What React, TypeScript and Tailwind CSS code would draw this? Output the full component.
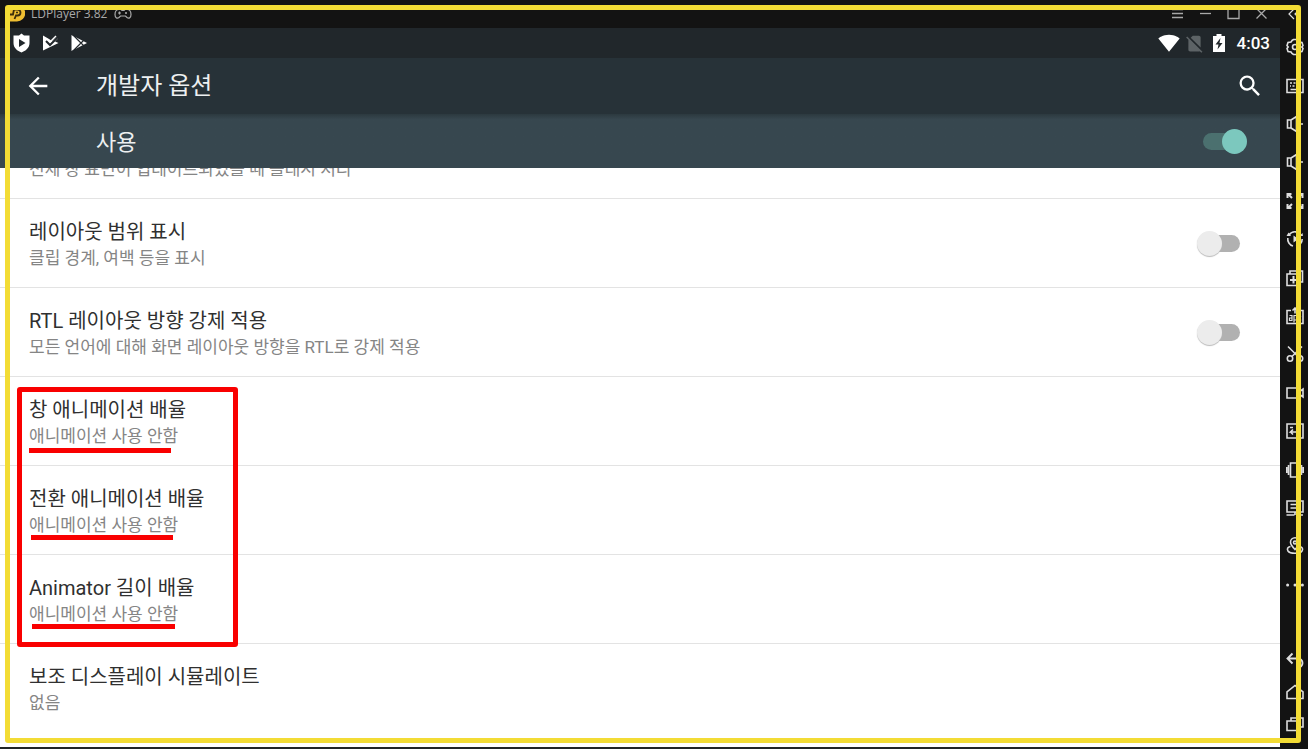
import type { ReactNode } from "react";
import { MdArrowBack, MdSearch, MdSignalWifi4Bar, MdSignalCellularNoSim } from "react-icons/md";

type Option = { id: string; title: string; summary: string; toggle?: boolean };

const options: Option[] = [
  { id: "layout-bounds", title: "레이아웃 범위 표시", summary: "클립 경계, 여백 등을 표시", toggle: true },
  { id: "rtl", title: "RTL 레이아웃 방향 강제 적용", summary: "모든 언어에 대해 화면 레이아웃 방향을 RTL로 강제 적용", toggle: true },
  { id: "window-scale", title: "창 애니메이션 배율", summary: "애니메이션 사용 안함" },
  { id: "transition-scale", title: "전환 애니메이션 배율", summary: "애니메이션 사용 안함" },
  { id: "animator-scale", title: "Animator 길이 배율", summary: "애니메이션 사용 안함" },
  { id: "display", title: "보조 디스플레이 시뮬레이트", summary: "없음" },
];

function Icon({ children }: { children: ReactNode }) {
  return (
    <svg viewBox="0 0 18 18" className="size-[18px]" fill="none" stroke="currentColor" strokeWidth="1.600" aria-hidden="true">
      {children}
    </svg>
  );
}

const speaker = <path d="M1.500 5v8H5V5zM5 5 10.500 1.500v15L5 13M13.500 9H17" />;

const tools: { label: string; icon: ReactNode }[] = [
  {
    label: "설정",
    icon: (
      <>
        <path d="M6 2.500 7.500 1.500h3L12 2.500l1 1.500 3 .5 1 3-1.200 1.500L17 10.500l-1 3-3 .5-1 1.500-1.500 1h-3l-1.500-1L5 14l-3-.5-1-3L2.200 9 1 7.500l1-3 3-.5z" />
        <circle cx="9" cy="9" r="2.500" />
      </>
    ),
  },
  {
    label: "키보드",
    icon: (
      <>
        <path d="M1 2.500h16v13H1z" />
        <path d="M4 6h2M7.500 6h2M11 6h3M4 9h1M6.500 9h2M10 9h2M13 9h1M4.500 12.500h9" />
      </>
    ),
  },
  { label: "볼륨 높이기", icon: speaker },
  { label: "볼륨 낮추기", icon: speaker },
  {
    label: "전체 화면",
    icon: <path strokeWidth="2" d="M1.500 6V2h4M2 2l4 4M12.500 2h4v4M16 2l-4 4M1.500 12v4h4M2 16l4-4M12.500 16h4v-4M16 16l-4-4" />,
  },
  {
    label: "동기화",
    icon: (
      <>
        <path d="M15.500 6A7.200 7.200 0 0 0 3 5M1.800 8A7.200 7.200 0 0 0 7 16M10 16.200A7.200 7.200 0 0 0 16.200 9" />
        <path d="M7.500 5.500v7l5-3.500zM.5 6l2-3.500L5 6zM14 5.500l3 .5-.5-3z" fill="currentColor" stroke="none" />
      </>
    ),
  },
  {
    label: "멀티 플레이어",
    icon: (
      <>
        <path d="M1 5h12.500v11.500H1zM4 5V2h12.500v11h-3" />
        <path strokeWidth="2" d="M7.500 7v7.500M4 11h7" />
      </>
    ),
  },
  {
    label: "APK 설치",
    icon: (
      <>
        <path d="M5 3.500H1v13h16v-13h-4M9 6.500V1M6.500 3.500 9 1l2.500 2.500" />
        <path strokeWidth="1.200" d="M3.500 8.500H6v5H3.500V11H6M8 15.500v-7h2.500v4.500H8M12.500 7v6.500M15 9l-2.500 2 2.500 2.500" />
      </>
    ),
  },
  {
    label: "스크린샷",
    icon: (
      <>
        <circle cx="4" cy="13.500" r="2.700" />
        <circle cx="14" cy="13.500" r="2.700" />
        <path d="M2 1.500 12 11.500M16 1.500 6 11.500" />
      </>
    ),
  },
  { label: "녹화", icon: <path d="M1 4h12v10H1zM13 8l4-3v8l-4-3" /> },
  {
    label: "조작 기록",
    icon: <path d="M1 2h16v14H1zM4 5.500h3M10 5.500h4M14 10H4.500L7 7.500M4.500 10 7 12.500" />,
  },
  { label: "흔들기", icon: <path d="M4.500 2h9v14h-9zM2.500 4v10M.8 6v6M15.500 4v10M17.200 6v6" /> },
  {
    label: "가상 화면",
    icon: <path d="M1 2h16v11H1zM4.500 5.500h8M4.500 9h6M.5 16h8M11.500 16H17M9 13v3" />,
  },
  {
    label: "위치",
    icon: (
      <>
        <path d="M9 12.500S4.500 8 4.500 5.300a4.500 4.500 0 0 1 9 0C13.500 8 9 12.500 9 12.500z" />
        <circle cx="9" cy="5.500" r="1.500" />
        <path d="M4.500 9.500C1.500 10 .8 12 2 14c2 3 12 3 14 0 1.200-2 .5-4-2.500-4.500" />
      </>
    ),
  },
  {
    label: "더 보기",
    icon: (
      <g fill="currentColor" stroke="none">
        <circle cx="1.600" cy="9" r="1.500" />
        <circle cx="9" cy="9" r="1.500" />
        <circle cx="16.400" cy="9" r="1.500" />
      </g>
    ),
  },
];

const navigation: { label: string; icon: ReactNode }[] = [
  { label: "뒤로", icon: <path strokeWidth="1.900" d="M6.500 2.500 1.500 7.500l5 5M1.500 7.500h10c3 0 5 2 5 4.500s-2 4.500-5 4.500h-1" /> },
  { label: "홈", icon: <path d="M1 15.500V9l8-6.500L17 9v6.500z" /> },
  { label: "최근 앱", icon: <path d="M1 6h12v9.500H1zM5 6V3h12v9h-4" /> },
];

function SideButton({ label, icon }: { label: string; icon: ReactNode }) {
  return (
    <button type="button" aria-label={label} className="flex items-center justify-center">
      <Icon>{icon}</Icon>
    </button>
  );
}

function Logo() {
  return (
    <svg viewBox="0 0 17 17" className="size-[17px]" aria-hidden="true">
      <path d="M4 0h5a8 8 0 0 1 0 16.500H1V12H0V9h2V3z" fill="#eebd31" />
      <path d="M6.500 14 8 10.500h1.500a3 3 0 0 0 0-6H6L5 9.500H2" fill="none" stroke="#3b2c0c" strokeWidth="1.800" />
      <path d="M8 7.500h2" stroke="#3b2c0c" strokeWidth="1.500" />
    </svg>
  );
}

function TitleBar() {
  return (
    <div className="flex h-[28px] items-center justify-between bg-[#131313] pr-3 pb-px pl-2 text-[#a9a9a9]">
      <div className="flex items-center gap-[6px]">
        <Logo />
        <span className="font-['Open_Sans',sans-serif] text-[12px] leading-4">LDPlayer 3.82</span>
        <svg viewBox="0 0 18 12" className="ml-px h-3 w-[18px]" fill="none" stroke="currentColor" strokeWidth="1.200" aria-hidden="true">
          <path d="M5 1.500h2l1 1h2l1-1h2c3 0 4 2 4 5s-2 4.500-4 3L11.500 8h-5L5 9.500c-2 1.500-4 0-4-3s1-5 4-5z" />
          <path d="M4 5h3M5.500 3.500v3M12 4v2M13 5h-2" />
        </svg>
      </div>
      <div className="flex items-center gap-[15px]">
        <button type="button" aria-label="메뉴">
          <svg viewBox="0 0 13 13" className="size-[13px]" stroke="currentColor" strokeWidth="1.300"><path d="M1 2.500h11M1 6.500h11M1 10.500h11" /></svg>
        </button>
        <button type="button" aria-label="최소화">
          <svg viewBox="0 0 13 13" className="size-[13px]" stroke="currentColor" strokeWidth="1.300"><path d="M1 6.500h11" /></svg>
        </button>
        <button type="button" aria-label="최대화">
          <svg viewBox="0 0 13 13" className="size-[13px]" fill="none" stroke="currentColor" strokeWidth="1.300"><path d="M1 1h11v10.500H1z" /></svg>
        </button>
        <button type="button" aria-label="닫기">
          <svg viewBox="0 0 13 13" className="size-[13px]" stroke="currentColor" strokeWidth="1.300"><path d="m1.500 1.500 10 10M11.500 1.500l-10 10" /></svg>
        </button>
      </div>
    </div>
  );
}

function StatusBar() {
  return (
    <div className="flex h-[30px] items-center justify-between bg-[#21272b] pr-[10px] pl-3 text-white">
      <div className="flex items-center gap-[10px]">
        <svg viewBox="0 0 19 20" className="h-5 w-[19px]" aria-hidden="true">
          <path d="M9.500.5 12 2.500h5.500V10c0 5-4 8-8 9.500C5.500 18 1.500 15 1.500 10V2.500H7z" fill="#fff" />
          <path d="M7 6v8l6.500-4z" fill="#21272b" />
        </svg>
        <svg viewBox="0 0 19 20" className="h-5 w-[19px]" aria-hidden="true">
          <path d="M2 2.500 8 6l3 2 5-4 1 1.500-3 3 3.500 1.500L2 17.500z" fill="#fff" />
          <path d="m5 8 4 4 8-8" fill="none" stroke="#21272b" strokeWidth="2" />
          <path d="m9 9 6-6" stroke="#fff" strokeWidth="1.500" />
        </svg>
        <svg viewBox="0 0 19 20" className="h-5 w-[19px]" aria-hidden="true">
          <path d="M1.500 2 17 10 1.500 18z" fill="#fff" />
          <path d="m2 1 12 12M2 19 14 7" stroke="#21272b" strokeWidth="1.200" />
        </svg>
      </div>
      <div className="flex items-center">
        <MdSignalWifi4Bar className="size-[22px]" aria-hidden="true" />
        <MdSignalCellularNoSim className="ml-1 size-[21px] text-[#5d6366]" aria-hidden="true" />
        <svg viewBox="0 0 12 18" className="ml-2 h-[18px] w-3" aria-hidden="true">
          <path d="M3.500 0h5v2H12v16H0V2h3.500z" fill="#fff" />
          <path d="M7.500 4 2.500 10.500h3L4.500 15.500 9.500 9h-3z" fill="#21272b" />
        </svg>
        <span className="ml-3 text-[17px] leading-6 font-medium">4:03</span>
      </div>
    </div>
  );
}

function OptionRow({ option }: { option: Option }) {
  return (
    <li className="flex items-center justify-between border-b border-[#e3e3e3] pr-10 pl-[29px] last:border-b-0">
      <label htmlFor={option.toggle ? option.id : undefined} className="flex flex-col pt-5 pb-4">
        <span className="text-[20px] leading-[26px] text-[#303030]">{option.title}</span>
        <span className="text-[17px] leading-[26px] text-[#858585]">{option.summary}</span>
      </label>
      {option.toggle && (
        <input
          id={option.id}
          type="checkbox"
          role="switch"
          className="relative h-[17px] w-9 appearance-none rounded-full bg-[#b1b1b1] before:absolute before:-top-1 before:-left-[7px] before:size-[25px] before:rounded-full before:bg-[#ececec] before:shadow-[0_1px_1px_#bbbbbb] checked:before:left-4"
        />
      )}
    </li>
  );
}

function Annotations() {
  return (
    <div className="pointer-events-none absolute inset-0" aria-hidden="true">
      <div className="absolute top-[387px] left-[17px] h-[260px] w-[221px] rounded-[3px] border-5 border-[#f90000]" />
      <div className="absolute top-[448px] left-[29px] h-[5px] w-[142px] bg-[#f90000]" />
      <div className="absolute top-[535px] left-[31px] h-[5px] w-[142px] bg-[#f90000]" />
      <div className="absolute top-[624px] left-8 h-[5px] w-[143px] bg-[#f90000]" />
      <div className="absolute top-[5px] right-[7px] bottom-[6px] left-[5px] rounded-[3px] border-5 border-[#f3dc35]" />
    </div>
  );
}

export default function App() {
  return (
    <div className="relative flex min-h-screen bg-[#131313] font-[Roboto,'Noto_Sans_CJK_KR',sans-serif]">
      <div className="flex min-w-0 flex-1 flex-col border-b-2 border-[#202426]">
        <TitleBar />
        <StatusBar />
        <header className="flex h-14 items-center bg-[#273238] pr-4 pl-6 text-white">
          <button type="button" aria-label="뒤로" className="mr-11">
            <MdArrowBack className="size-7" />
          </button>
          <h1 className="flex-1 text-[24px] leading-8 text-[#edf0f1]">개발자 옵션</h1>
          <button type="button" aria-label="검색">
            <MdSearch className="size-7" />
          </button>
        </header>
        <div className="flex h-[54px] items-center justify-between bg-[#37474f] bg-linear-to-b from-[#2c393f] to-[#37474f] to-10% pr-[39px] pl-[96px]">
          <label htmlFor="enabled" className="pt-1 text-[22px] leading-8 text-[#edf0f1]">
            사용
          </label>
          <input
            id="enabled"
            type="checkbox"
            role="switch"
            defaultChecked
            className="relative h-[17px] w-[38px] appearance-none rounded-full bg-[#4b706f] before:absolute before:-top-1 before:right-4 before:size-[25px] before:rounded-full before:bg-[#7cc8be] checked:before:-right-[6px]"
          />
        </div>
        <main className="flex-1 bg-white">
          <div className="flex h-[31px] items-end overflow-hidden border-b border-[#e3e3e3] pb-4 pl-[29px]">
            <p className="text-[17px] leading-[26px] text-[#858585]">전체 창 표면이 업데이트되었을 때 플래시 처리</p>
          </div>
          <ul>
            {options.map((option) => (
              <OptionRow key={option.id} option={option} />
            ))}
          </ul>
        </main>
      </div>
      <aside className="flex w-7 flex-col bg-[#131313] pl-px text-[#dedede]">
        <button type="button" aria-label="접기" className="flex h-[28px] items-center justify-center">
          <Icon>
            <path strokeWidth="1.200" d="M8 4 3 9l5 5M14 4 9 9l5 5" />
          </Icon>
        </button>
        <div className="grid h-[576px] grid-rows-15">
          {tools.map((tool) => (
            <SideButton key={tool.label} {...tool} />
          ))}
        </div>
        <div className="mt-auto flex flex-col gap-[14px] pb-4">
          {navigation.map((item) => (
            <SideButton key={item.label} {...item} />
          ))}
        </div>
      </aside>
      <Annotations />
    </div>
  );
}
